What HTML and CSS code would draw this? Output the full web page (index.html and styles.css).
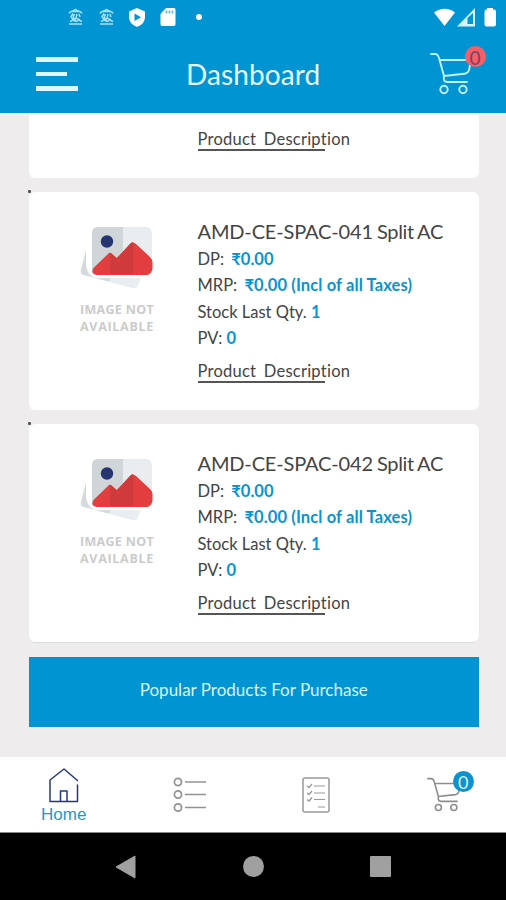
FILE: index.html
```html
<!DOCTYPE html>
<html lang="en">
<head>
<meta charset="utf-8">
<title>Dashboard</title>
<link rel="stylesheet" href="styles.css">
</head>
<body>
<svg class="defs" width="0" height="0" aria-hidden="true">
  <defs>
    <g id="notice" fill="none" stroke="#a5e1f5" stroke-width="1.5">
      <path d="M1 5.5C2 2.5 5 4 7.500 1.500C10 4 13 2.500 14 5.500M3 3.500h9M1 16h13"/>
      <path d="M5 5.500L3 8.500L5.500 12.500M7 6.500C4.500 7 5 11.500 8 11.500M9 6l-1 4l4 2M11 6l1 3M2 13.500l3-1.500l3 1.500l3-1.500l3 1.500"/>
    </g>
    <g id="photo">
      <path d="M6 24L1 44Q0 48 4 49L52 62Q57 63 58 59L61 52H17Q8 51 6 40Z" fill="#e8edef"/>
      <path d="M6 24L1 44Q0 48 4 49L29 55.500L31 52H17Q8 51 6 40Z" fill="#d5dadc"/>
      <rect x="12" y="1" width="60" height="47" rx="6" fill="#e9edf0"/>
      <path d="M43 1H18Q12 1 12 7V42Q12 48 18 48H43Z" fill="#d0d5d8"/>
      <circle cx="27" cy="15.500" r="6.200" fill="#26346f"/>
      <path d="M13.500 42L28 28Q30 25.500 32 28L37 32L50 18Q53 15 56 18L70 31Q73 34 72.500 38V43Q71 49 66 49H17Q10 48 13.500 42Z" fill="#e33e3f"/>
      <path d="M30 27Q31 27 32 28L51 48H30ZM53 16V48H51L37 32L50 18Q51.500 16 53 16Z" fill="#cf3a3d"/>
    </g>
    <g id="cart" fill="none" stroke-linecap="round" stroke-linejoin="round">
      <path d="M1 2H5Q8 2 9 6L14 24L32 22Q38 22 39 18L41 8H10M14 24Q13 30 17 30H37"/>
      <circle cx="14" cy="37.500" r="3.700"/><circle cx="33" cy="37.500" r="3.700"/>
    </g>
  </defs>
</svg>
<div class="phone">
  <header class="header">
    <div class="status">
      <svg width="16" height="17"><use href="#notice"/></svg>
      <svg width="16" height="17"><use href="#notice"/></svg>
      <svg class="shield" width="18" height="19" viewBox="0 0 18 19"><path d="M9 0L17 3.500V9Q17 16 9 19Q1 16 1 9V3.500Z" fill="#fff"/><path d="M6.500 5.500V13L13 9.300Z" fill="#0094d3"/></svg>
      <svg class="sd" width="16" height="18" viewBox="0 0 16 18"><path d="M6 0H14Q15.500 0 15.500 2V16Q15.500 18 14 18H2Q.5 18 .5 16V6Z" fill="#fff"/><path d="M6.500 2.500v3M9.500 2.500v3M12.500 2.500v3" stroke="#65bde2" stroke-width="1.800"/></svg>
      <i class="dot"></i>
      <svg class="signals" width="64" height="20" viewBox="0 0 64 20"><path d="M0 4.500Q11 -3 21 4.500L10.500 18Z" fill="#fff"/><path d="M23 18.500L41 0V18.500Z" fill="#d5f3fc"/><path d="M33.500 10L39 5V16H33.500Z" fill="#0094d3"/><path d="M53 1.500V0H59V1.500H60Q62 1.500 62 3.500V16.500Q62 18.500 60 18.500H52.500Q50.500 18.500 50.500 16.500V3.500Q50.500 1.500 52.500 1.500Z" fill="#fff"/></svg>
    </div>
    <div class="toolbar">
      <div class="burger"><i></i><i class="short"></i><i></i></div>
      <h1>Dashboard</h1>
      <div class="top-cart"><svg width="43" height="43" viewBox="0 0 43 43"><use href="#cart"/></svg><span class="badge">0</span></div>
    </div>
  </header>

  <main class="content">
    <section class="card clipped"><a class="description"><span>Product Description</span></a></section>
    <section class="card">
      <i class="corner"></i>
      <div class="picture"><svg width="74" height="63"><use href="#photo"/></svg><p><span class="cap-a">IMAGE NOT</span><br><span class="cap-b">AVAILABLE</span></p></div>
      <div class="details">
        <h2>AMD-CE-SPAC-041 <span class="kind">Split AC</span></h2>
        <p class="dp">DP: <b>₹0.00</b></p>
        <p class="mrp">MRP: <b>₹0.00 (Incl of all Taxes)</b></p>
        <p class="stock">Stock Last Qty. <b>1</b></p>
        <p class="pv">PV: <b>0</b></p>
        <a class="description"><span>Product Description</span></a>
      </div>
    </section>
    <section class="card last">
      <i class="corner"></i>
      <div class="picture"><svg width="74" height="63"><use href="#photo"/></svg><p><span class="cap-a">IMAGE NOT</span><br><span class="cap-b">AVAILABLE</span></p></div>
      <div class="details">
        <h2>AMD-CE-SPAC-042 <span class="kind">Split AC</span></h2>
        <p class="dp">DP: <b>₹0.00</b></p>
        <p class="mrp">MRP: <b>₹0.00 (Incl of all Taxes)</b></p>
        <p class="stock">Stock Last Qty. <b>1</b></p>
        <p class="pv">PV: <b>0</b></p>
        <a class="description"><span>Product Description</span></a>
      </div>
    </section>
    <div class="banner">Popular Products For Purchase</div>
  </main>

  <nav class="tabs">
    <div class="tab home"><svg width="32" height="36" viewBox="0 0 32 36" fill="none" stroke="#28377c" stroke-width="1.500" stroke-linejoin="round" stroke-linecap="round"><path d="M29.500 12.500L16 1L2 12V33.500H29.500V17M12.500 33V23H19V33"/></svg><span>Home</span></div>
    <div class="tab"><svg width="34" height="36" viewBox="0 0 34 36" fill="none" stroke="#929292" stroke-width="1.700"><circle cx="5" cy="5" r="3.600"/><circle cx="5" cy="17.500" r="3.600"/><circle cx="5" cy="30.500" r="3.600"/><path d="M12 5H33M12 17.500H33M12 30.500H33"/></svg></div>
    <div class="tab"><svg width="28" height="36" viewBox="0 0 28 36" fill="none" stroke="#999" stroke-width="1.500"><rect x="1" y="1" width="26" height="34" rx="2"/><path d="M12 9H23M12 16H23M12 22.500H23M16 30H23" stroke-width="1.200"/><path d="M5 9L7 10.500L10 7M5 16L7 17.500L10 14M5 22.500L7 24L10 20.500" stroke-width="1.300"/></svg></div>
    <div class="tab"><div class="bottom-cart"><svg width="35" height="35" viewBox="0 0 43 43"><use href="#cart"/></svg><span class="badge">0</span></div></div>
  </nav>
  <footer class="system">
    <svg width="22" height="24"><path d="M1 12L20 1V23Z" fill="#a0a0a0" stroke="#a0a0a0" stroke-linejoin="round"/></svg>
    <i class="circle"></i>
    <i class="square"></i>
  </footer>
</div>
</body>
</html>
```
FILE: styles.css
```css
* { box-sizing: border-box; }
body { margin: 0; font-family: Lato, sans-serif; color: #444; }
h1, h2, p { margin: 0; font-weight: 400; }
svg, i { display: block; flex-shrink: 0; }
.defs { position: absolute; }
.phone { width: 506px; height: 900px; display: flex; flex-direction: column; overflow: hidden; background: #eeeced; }
.header { height: 113px; background: #0094d3; color: #e5f9ff; flex-shrink: 0; }
.status { height: 35px; padding: 8px 8px 0 68px; display: flex; align-items: flex-start; gap: 15px; }
.status .shield { margin-left: -2px; }
.status .sd { margin-left: -1px; }
.dot { width: 6px; height: 6px; border-radius: 50%; background: #fff; margin: 6px 0 0 5px; }
.signals { margin-left: auto; }
.toolbar { height: 78px; display: flex; padding-left: 36px; }
.burger { width: 42px; display: flex; flex-direction: column; gap: 10px; padding-top: 22px; }
.burger i { height: 4.500px; background: #dcf7ff; }
.burger .short { width: 31px; }
h1 { width: 136px; font-size: 28px; line-height: 34px; letter-spacing: .1px; padding-top: 22px; margin-left: 108px; white-space: nowrap; }
.top-cart { position: relative; width: 46px; padding-top: 17px; margin-left: 107.500px; }
.top-cart svg { stroke: #c0f0fb; stroke-width: 1.900; }
.badge { position: absolute; border-radius: 50%; text-align: center; }
.top-cart .badge { top: 10.500px; left: 35px; width: 21px; height: 21px; background: #f75e65; color: #774565; font-size: 19px; line-height: 23px; }
.content { height: 644px; flex-shrink: 0; padding: 0 27px 0 28.500px; }
.card { position: relative; height: 218px; margin-bottom: 14px; border-radius: 6px; background: #fff; display: flex; }
.card.clipped { height: 65px; border-radius: 0 0 6px 6px; padding: 14px 0 0 169px; }
.card.last { margin-bottom: 15px; box-shadow: 0 1px 1px #dedede; }
.corner { position: absolute; left: -1px; top: -2px; width: 3px; height: 3px; background: #555; border-radius: 1px; }
.picture { width: 169px; padding: 34px 0 0 51.500px; }
.picture p { width: 80px; margin: 12px 0 0 -3px; font: 700 12.500px/17px "Open Sans", sans-serif; letter-spacing: .3px; color: #cbcbcb; text-align: center; white-space: nowrap; }
.cap-b { letter-spacing: .7px; }
.details { padding-top: 24px; white-space: nowrap; }
h2 { font-size: 20px; line-height: 30px; letter-spacing: -.15px; word-spacing: -1px; }
.kind { letter-spacing: -.3px; }
.details p { font-size: 16.500px; line-height: 26.300px; }
.dp b { margin-left: 3px; }
.mrp b { margin-left: 3px; letter-spacing: .12px; }
b { color: #0994cf; }
.description { display: block; width: fit-content; font-size: 16.500px; line-height: 24px; letter-spacing: .25px; word-spacing: 3px; white-space: nowrap; }
.description::after { content: ""; display: block; width: 127px; height: 1.500px; margin-top: -2px; background: #555; }
.details .description { margin-top: 8px; }
.banner { height: 70px; background: #0094d3; color: #d9f5ff; text-align: center; font-size: 17px; line-height: 65px; }
.tabs { height: 76px; flex-shrink: 0; display: grid; grid-template-columns: repeat(4, 1fr); background: #fff; border-bottom: 1px solid #888; }
.tab { display: flex; flex-direction: column; align-items: center; padding-top: 20px; }
.home { padding: 11px 0 0 1px; color: #199bce; font: 17px/22px "Liberation Sans", sans-serif; }
.bottom-cart { position: relative; width: 34px; padding-left: 1px; }
.bottom-cart svg { stroke: #8e8e8e; stroke-width: 2; }
.bottom-cart .badge { left: 27px; top: -6px; width: 21px; height: 21px; background: #0e91cc; color: #d8f5ff; font-size: 18px; line-height: 23px; }
.system { height: 67px; flex-shrink: 0; background: #000; display: flex; justify-content: center; align-items: center; gap: 106px; }
.circle { width: 21px; height: 21px; border-radius: 50%; background: #a0a0a0; }
.square { width: 21px; height: 21px; border-radius: 1px; background: #a0a0a0; }
```
